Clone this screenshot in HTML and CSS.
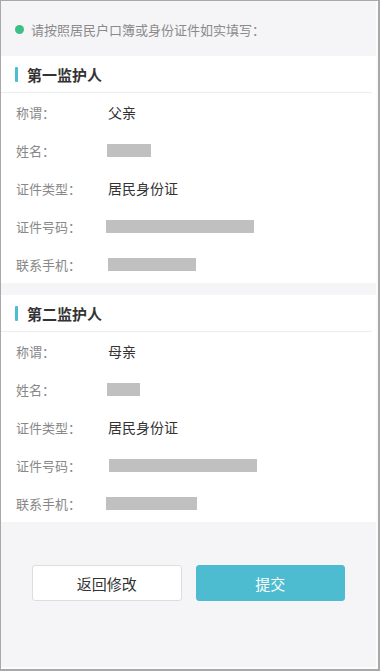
FILE: index.html
```html
<!DOCTYPE html>
<html lang="zh-CN">
<head>
<meta charset="utf-8">
<title>监护人信息确认</title>
<link rel="stylesheet" href="styles.css">
</head>
<body>
<div class="frame">
  <div class="screen">
    <div class="notice">
      <span class="dot"></span>
      <span class="notice-text">请按照居民户口簿或身份证件如实填写<span class="colon">：</span></span>
    </div>

    <section class="card">
      <h2 class="card-title"><span class="bar"></span>第一监护人</h2>
      <div class="row"><span class="label">称谓<span class="colon">：</span></span><span class="value">父亲</span></div>
      <div class="row"><span class="label">姓名<span class="colon">：</span></span><span class="mask m-name1"></span></div>
      <div class="row"><span class="label">证件类型<span class="colon">：</span></span><span class="value">居民身份证</span></div>
      <div class="row"><span class="label">证件号码<span class="colon">：</span></span><span class="mask m-id1"></span></div>
      <div class="row"><span class="label">联系手机<span class="colon">：</span></span><span class="mask m-tel1"></span></div>
    </section>

    <section class="card">
      <h2 class="card-title"><span class="bar"></span>第二监护人</h2>
      <div class="row"><span class="label">称谓<span class="colon">：</span></span><span class="value">母亲</span></div>
      <div class="row"><span class="label">姓名<span class="colon">：</span></span><span class="mask m-name2"></span></div>
      <div class="row"><span class="label">证件类型<span class="colon">：</span></span><span class="value">居民身份证</span></div>
      <div class="row"><span class="label">证件号码<span class="colon">：</span></span><span class="mask m-id2"></span></div>
      <div class="row"><span class="label">联系手机<span class="colon">：</span></span><span class="mask m-tel2"></span></div>
    </section>

    <div class="actions">
      <button class="btn btn-back" type="button">返回修改</button>
      <button class="btn btn-submit" type="button">提交</button>
    </div>
  </div>
</div>
</body>
</html>
```

FILE: styles.css
```css
* { box-sizing: border-box; }

html, body {
  margin: 0;
  padding: 0;
}

body {
  width: 380px;
  height: 671px;
  font-family: "Noto Sans CJK SC", "Noto Sans", "Liberation Sans", sans-serif;
  background: #ffffff;
}

.frame {
  width: 380px;
  height: 671px;
  border-style: solid;
  border-color: #a8a8a8;
  border-width: 1px 2px 2px 1px;
}

.screen {
  height: 100%;
  background: #f5f5f7;
  border-right: 2px solid #fbfbfc;
  border-bottom: 2px solid #fbfbfc;
  display: flex;
  flex-direction: column;
}

.notice {
  height: 55px;
  display: flex;
  align-items: center;
  padding-left: 14px;
  padding-top: 1px;
}

.dot {
  width: 9px;
  height: 9px;
  border-radius: 50%;
  background: #3dbf85;
  margin-right: 7px;
  flex: none;
}

.notice-text {
  font-size: 13px;
  color: #8a8a8a;
  line-height: 1;
}

.colon {
  font-family: "Noto Sans CJK TC", "Noto Sans CJK SC", sans-serif;
}

.card {
  background: #ffffff;
  margin: 0 0 12px 0;
}

.card-title {
  margin: 0 4px 0 0;
  height: 37px;
  display: flex;
  align-items: center;
  padding-left: 14px;
  font-size: 15px;
  font-weight: bold;
  color: #333333;
  border-bottom: 1px solid #ececec;
}

.bar {
  width: 3px;
  height: 15px;
  background: #4dbdd1;
  border-radius: 1px;
  margin-right: 9px;
}

.row {
  height: 38px;
  display: flex;
  align-items: center;
  padding-left: 15px;
}

.label {
  width: 92px;
  flex: none;
  font-size: 13px;
  color: #888888;
}

.value {
  font-size: 14px;
  color: #333333;
}

.mask {
  display: block;
  height: 13px;
  background: #c0c0c0;
}

.m-name1 { width: 44px; margin-left: -1px; }
.m-id1   { width: 148px; margin-left: -2px; }
.m-tel1  { width: 88px; }
.m-name2 { width: 33px; margin-left: -1px; }
.m-id2   { width: 148px; margin-left: 1px; }
.m-tel2  { width: 91px; margin-left: -2px; }

.actions {
  display: flex;
  gap: 14px;
  padding: 31px 31px 0 31px;
}

.btn {
  flex: 1;
  height: 36px;
  border-radius: 3px;
  font-family: inherit;
  font-size: 15px;
  cursor: pointer;
}

.btn-back {
  background: #ffffff;
  border: 1px solid #dddddd;
  color: #333333;
}

.btn-submit {
  background: #4dbcd0;
  border: 1px solid #4dbcd0;
  color: #ffffff;
}
```
